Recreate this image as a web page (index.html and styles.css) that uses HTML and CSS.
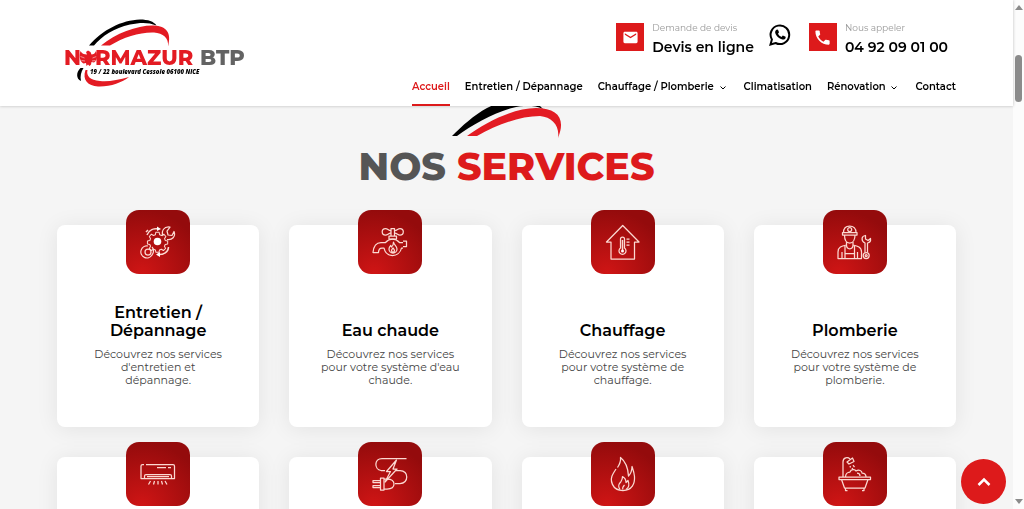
FILE: index.html
```
<!DOCTYPE html>
<html lang="fr">
<head>
    <meta charset="UTF-8">
    <meta name="viewport" content="width=device-width, initial-scale=1">
    <title>Normazur BTP</title>
    <link rel="stylesheet" href="styles.css">
</head>
<body>

    <header class="header">
        <div class="container header-inner">
            <a href="#" class="logo" aria-label="Normazur BTP">
                <svg viewBox="0 0 194 90" width="194" height="90">
                    <path fill="#000" d="M32 35.500C45 20 65 10 83 9.500c8 0 14 2 16.500 6C91 12 83 12.500 73 14.500 57 18 45 26 37 35.500z"/>
                    <path fill="#e31b23" d="M44 35.500C59 23 81 15 97 15.500c12 .5 18 7 14 21C112 28 106 23 97 22.500 83 22 67 27 53 35.500z"/>
                    <path fill="#000" d="M23.500 58C19 62 19 69 24 71 23 66 24 62 26.500 58z"/>
                    <path fill="#e31b23" d="M28.500 60C25 70 31 76 41 76.500c12 .5 24-4 31-9.500C61 70 51 72 43 71 33 70 29 66 30.500 60z"/>
                    <g transform="translate(-1.500 0)">
                        <path fill="#e31b23" d="M25 41c-2 6 0 11 3 12.500l2.500-.5.5 3 1.500-1.500 1.500 1.500 1.500-1.500.5-2.500 2.500.5c3-1.500 4-6 2-11.500-1 2.500-2.500 3.500-4.500 3.500l-1-2.500-2.500-1.500-2 1.500 1 2.500c-3 0-5.500-1-6.500-3.500z"/>
                        <path stroke="#fff" stroke-width=".5" fill="none" d="M25 46.500l4 1.500M26 50.500l3.500.5M41 46.500L37 48M40 50.500l-3.500.5"/>
                    </g>
                    <text class="logo-name" x="7" y="55">N</text>
                    <text class="logo-name" x="38" y="55">RMAZUR</text>
                    <text class="logo-name logo-grey" x="143" y="55">BTP</text>
                    <text class="logo-address" x="33" y="64">19 / 22 boulevard Cessole 06100 NICE</text>
                </svg>
            </a>

            <div class="header-right">
                <div class="contacts">
                    <a href="#" class="contact">
                        <span class="contact-icon">
                            <svg viewBox="0 0 24 24" width="17" height="17"><path fill="#fff" d="M20 4H4c-1.100 0-2 .9-2 2v12c0 1.100.9 2 2 2h16c1.100 0 2-.9 2-2V6c0-1.100-.9-2-2-2zm0 4l-8 5-8-5V6l8 5 8-5v2z"/></svg>
                        </span>
                        <span class="contact-text"><small>Demande de devis</small><strong>Devis en ligne</strong></span>
                    </a>
                    <a href="#" class="whatsapp" aria-label="WhatsApp">
                        <svg viewBox="0 0 22 22" width="22" height="22">
                            <path fill="none" stroke="#000" stroke-width="2" d="M1.500 20.500l1.400-5A9.300 9.300 0 1 1 6.600 19z"/>
                            <path d="M7.600 5.700c.5-.4 1.200-.3 1.500.3l.8 1.900c.1.400 0 .7-.3 1l-.6.800c.8 1.500 1.900 2.500 3.500 3.200l.9-1c.3-.3.600-.4.900-.2l1.900.9c.5.2.6.7.4 1.300-.5 1.300-1.900 1.900-3.200 1.600-3.500-.8-6.400-3.500-7.200-6.700-.3-1.200.4-2.500 1.400-3.100z"/>
                        </svg>
                    </a>
                    <a href="#" class="contact">
                        <span class="contact-icon">
                            <svg viewBox="0 0 24 24" width="19" height="19"><path fill="#fff" d="M6.620 10.790c1.440 2.830 3.760 5.140 6.590 6.590l2.200-2.200c.27-.27.67-.36 1.020-.24 1.120.37 2.330.57 3.570.57.55 0 1 .45 1 1V20c0 .55-.45 1-1 1-9.390 0-17-7.610-17-17 0-.55.45-1 1-1h3.500c.55 0 1 .45 1 1 0 1.250.2 2.450.57 3.570.11.35.03.74-.25 1.020l-2.200 2.200z"/></svg>
                        </span>
                        <span class="contact-text"><small>Nous appeler</small><strong>04 92 09 01 00</strong></span>
                    </a>
                </div>

                <nav class="nav">
                    <a href="#" class="active">Accueil</a>
                    <a href="#">Entretien / Dépannage</a>
                    <a href="#">Chauffage / Plomberie <svg class="caret" viewBox="0 0 6 4" width="6" height="4"><path d="M.5.5L3 3 5.500.5"/></svg></a>
                    <a href="#">Climatisation</a>
                    <a href="#">Rénovation <svg class="caret" viewBox="0 0 6 4" width="6" height="4"><path d="M.5.5L3 3 5.500.5"/></svg></a>
                    <a href="#">Contact</a>
                </nav>
            </div>
        </div>
    </header>

    <main class="services">
        <div class="container">
            <svg class="swoosh" viewBox="0 0 110 40" width="110" height="40">
                <path fill="#000" d="M0 36C10 26 22 15 35 8 50 0 72-4 86 4l5 5C82 5 72 5 60 8 40 14 20 25 5 36z"/>
                <path fill="#e31b23" d="M15 36C34 22 62 8 84 8c22 0 30 11 22 30C108 26 100 17 88 16 68 16 44 25 25 36z"/>
            </svg>
            <h1>NOS <span>SERVICES</span></h1>

            <div class="cards">
                <article class="card">
                    <div class="card-icon">
                        <svg viewBox="0 0 64 64">
                            <path d="M30 22h4l.7 3 2.300 1 2.700-1.600 2.600 2.800-1.600 2.600.8 2.200 3 .7v3.600l-3 .6-1 2.200 1.500 2.600-2.700 2.600-2.500-1.600-2.300 1-.7 2.800h-3.600l-.7-2.800-2.300-1-2.500 1.600-2.600-2.600 1.500-2.600-.9-2.200-2.900-.6v-3.600l2.900-.7.9-2.200-1.500-2.600 2.600-2.800 2.500 1.600 2.300-1z" transform="translate(5.200 4.200) scale(.82)"/>
                            <circle class="fill" cx="31.500" cy="31.500" r="3.800"/>
                            <path d="M37 26c-2-5 1-10 7-9l-3 4 1 4 4 .5 2-4c2 5-2 9-7 8M26 37c2 2 2 6 0 8a6 6 0 1 1-4-9"/>
                            <circle cx="22" cy="42" r="3"/>
                            <path d="M21 25c2-5 7-7 12-6M20 22l2-2M42.500 37c0 5-5 8-11 7.500" stroke-width="1.500"/>
                            <path class="fill" d="M31 16.500l4 2.500-4 2zM34 42l-4 2.500 4 2.500z"/>
                        </svg>
                    </div>
                    <h2>Entretien / Dépannage</h2>
                    <p>Découvrez nos services d'entretien et dépannage.</p>
                </article>

                <article class="card">
                    <div class="card-icon">
                        <svg viewBox="0 0 64 64">
                            <path d="M33 20.500c-3 0-3-2-5.500-2a3.300 3.300 0 0 0 0 6.600c2.500 0 2.500-2 5.500-2M36.500 20.500c3 0 3-2 5.500-2a3.300 3.300 0 0 1 0 6.600c-2.500 0-2.500-2-5.500-2"/>
                            <path d="M33 26v-7.500h3.500V26M31 26h7.500v3H31z"/>
                            <path d="M45 32.500h-3.500c-4-4.500-10-4.500-14 0H23c-5 0-7.500 4-8 10h5.500c0-3 1-4.500 3.500-4.500h2c1 5 4.500 7.500 8.500 7.500s8-2.500 9-7.500H45M45 31h3.500v5.500H45"/>
                            <path d="M35.500 32c.5 3 3.500 4 3.500 7a4 4 0 0 1-8 0c0-1.500.7-2.500 1.700-3.500l.8 1.500c1.500-1 2-3 2-5zM35 38c-2 2-2 4 0 4s2-2 0-4z"/>
                        </svg>
                    </div>
                    <h2>Eau chaude</h2>
                    <p>Découvrez nos services pour votre système d'eau chaude.</p>
                </article>

                <article class="card">
                    <div class="card-icon">
                        <svg viewBox="0 0 64 64">
                            <path d="M31.700 15.500L15.500 32H20v17h23.500V32H48z"/>
                            <path d="M29.500 38V29a2 2 0 0 1 4 0v9a3.500 3.500 0 1 1-4 0zM35.500 29h3M35.500 32h3M35.500 35h3"/>
                            <path d="M31.500 30v10" stroke-width="1.500"/>
                            <circle class="fill" cx="31.500" cy="41" r="1.500"/>
                        </svg>
                    </div>
                    <h2>Chauffage</h2>
                    <p>Découvrez nos services pour votre système de chauffage.</p>
                </article>

                <article class="card">
                    <div class="card-icon">
                        <svg viewBox="0 0 64 64">
                            <path d="M20.500 22.500c0-4 2.500-6.500 6.200-6.500s6.300 2.500 6.300 6.500M19.500 22.500H34V25H19.500zM21.500 25c0 4 1.500 8 5.200 8s5.300-4 5.300-8"/>
                            <circle cx="26.700" cy="19.500" r="2"/>
                            <path d="M23.500 32v3c-5 1-8.500 2-8.500 7v6.500h23.500V42c0-5-4-6-8.500-7v-3M19 48.500V42M34.500 48.500V42M22 35.500V48M31.500 35.500V48M22 43.500h9.500M23.500 35c0 5 6.500 5 6.500 0"/>
                            <path d="M42 42.500V33c-4-2-4-7 .5-7.500v3.500l2.500 1.500 2.500-2c.5 2.500-1 4-3 4.500v9.500"/>
                            <circle cx="43.200" cy="45.500" r="3"/>
                            <circle cx="43.200" cy="45.500" r="1"/>
                        </svg>
                    </div>
                    <h2>Plomberie</h2>
                    <p>Découvrez nos services pour votre système de plomberie.</p>
                </article>

                <article class="card">
                    <div class="card-icon">
                        <svg viewBox="0 0 64 64">
                            <path d="M20 22.500h27c1 0 1.500.5 1.500 1.500v12.500H15V24c0-1 .5-1.500 1.500-1.500H18M31 25.500h9M42 25.500h3"/>
                            <path d="M18.500 36.500V34c0-1 .5-1.500 1.500-1.500h24c1 0 1.500.5 1.500 1.500v2.500M21 34.500h22"/>
                            <path d="M24.500 39l-2 3.500M28.500 39l-1 3.500M32 39v3.500M35.500 39l1 3.500M39 39l2 3.500"/>
                        </svg>
                    </div>
                    <h2>Climatisation</h2>
                    <p>Découvrez nos services de climatisation.</p>
                </article>

                <article class="card">
                    <div class="card-icon">
                        <svg viewBox="0 0 64 64">
                            <path d="M48.500 16.500H24c-8 0-8 11-1 12h4M38 28.500h4c9 0 9 13 0 13h-5"/>
                            <path d="M38.500 18l-10 11.500h4L27 40l12-13h-4z"/>
                            <path d="M26 36h-3.500v12H26zM26 37h3c5 0 7 2 7 5s-2 5-7 5h-3M22.500 38.500H15v2h7.500M22.500 43.500H15v2h7.500"/>
                        </svg>
                    </div>
                    <h2>Électricité</h2>
                    <p>Découvrez nos services d'électricité.</p>
                </article>

                <article class="card">
                    <div class="card-icon">
                        <svg viewBox="0 0 64 64">
                            <path d="M25 27l-2.500 4C18 38 21 48.500 32 48.500c9 0 12-7 11.500-14-.3-4-1.500-7-2.500-10 0 4-1 7-3.500 9.500C37 26 34 19 29.500 15.500c.5 4-1 7-3 10"/>
                            <path d="M29 47.500c-3-4-.5-6 1-8 1-1.500 1.500-3 1.500-5 2 1 3.500 3 3.500 6l2-2c1.500 4 1.500 7-2 9M32 47.500c-1-2 0-3 1.500-4.500"/>
                        </svg>
                    </div>
                    <h2>Gaz</h2>
                    <p>Découvrez nos services de gaz.</p>
                </article>

                <article class="card">
                    <div class="card-icon">
                        <svg viewBox="0 0 64 64">
                            <path d="M16 35h31.500v2.500H16zM18.500 37.500l3 8.500h20.500l3-8.500M22.500 46v2.500h2M41 46v2.500h-2M20 35V20c0-5 5-5 7-3"/>
                            <path d="M24 20l5.500-4 1.500 3.500-5 2.500zM27 24l.5 1.500M30 23l1.500 2M29 26l1 1.500"/>
                            <path d="M22.500 35c0-3 2-5 4.500-5 1-3 5-3 6-1 3-2 6 0 6 2 3 0 4 2 4 4M34 31c2 0 3 1 3 3"/>
                        </svg>
                    </div>
                    <h2>Rénovation</h2>
                    <p>Découvrez nos services de rénovation.</p>
                </article>
            </div>
        </div>
    </main>

    <button type="button" class="to-top" aria-label="Haut de page">
        <svg viewBox="0 0 14 10" width="14" height="10"><path fill="none" stroke="#fff" stroke-width="2.500" d="M1.500 8L7 2.500 12.500 8"/></svg>
    </button>

    <div class="scrollbar" aria-hidden="true">
        <svg viewBox="0 0 8 5" width="8" height="5"><path fill="#8b8b8b" d="M4 0l4 5H0z"/></svg>
        <div class="thumb"></div>
        <svg viewBox="0 0 8 5" width="8" height="5"><path fill="#8b8b8b" d="M4 5l4-5H0z"/></svg>
    </div>

</body>
</html>
```
FILE: styles.css
```
* {
    box-sizing: border-box;
}
body {
    margin: 0;
    height: 100vh;
    overflow: hidden;
    padding-right: 11px;
    background-color: #f5f5f5;
    font-family: 'Montserrat', 'Inter', sans-serif;
    color: #000;
}
a {
    color: inherit;
    text-decoration: none;
}
.container {
    max-width: 1140px;
    margin: 0 auto;
    padding: 0 57px;
}

/* header */
.header {
    position: fixed;
    top: 0;
    left: 0;
    right: 11px;
    z-index: 10;
    background-color: #fff;
    box-shadow: 0 0 3px rgba(0, 0, 0, 0.25);
}
.header-inner {
    display: flex;
    justify-content: space-between;
    align-items: flex-start;
}
.logo {
    padding-top: 10px;
}
.logo svg {
    display: block;
}
.logo-name {
    font-size: 21px;
    font-weight: 800;
    fill: #e31b23;
}
.logo-grey {
    fill: #636363;
}
.logo-address {
    font-family: 'Open Sans', sans-serif;
    font-size: 6px;
    font-weight: 800;
    font-style: italic;
}
.header-right {
    display: flex;
    flex-direction: column;
    align-items: flex-end;
    padding-top: 22px;
}
.contacts {
    display: flex;
    align-items: flex-start;
    padding-right: 8px;
}
.contact {
    display: flex;
    gap: 8px;
}
.contact-icon {
    display: flex;
    align-items: center;
    justify-content: center;
    width: 28px;
    height: 28px;
    margin-top: 1px;
    background-color: #dd1a1b;
}
.contact-text small {
    display: block;
    font-size: 9px;
    line-height: 12px;
    color: #999;
}
.contact-text strong {
    display: block;
    margin-top: 4px;
    font-size: 14px;
    line-height: 18px;
    font-weight: 600;
}
.whatsapp {
    margin: 2px 18px 0 15px;
}
.nav {
    display: flex;
    gap: 15px;
    margin-top: 21px;
    font-size: 10px;
    font-weight: 600;
}
.nav a {
    padding: 2px 0 9px;
    line-height: 16px;
    border-bottom: 2px solid transparent;
    white-space: nowrap;
}
.nav a.active {
    color: #dd1a1b;
    border-color: #dd1a1b;
}
.caret {
    margin: 0 3px 0 3px;
    fill: none;
    stroke: #000;
}

/* services */
.services {
    padding-top: 100px;
}
.swoosh {
    display: block;
    margin: 0 auto;
}
h1 {
    margin: 2px 0 33px;
    text-align: center;
    font-size: 38px;
    line-height: 50px;
    font-weight: 800;
    color: #555;
}
h1 span {
    color: #dd1a1b;
}
.cards {
    display: grid;
    grid-template-columns: repeat(4, 1fr);
    gap: 30px;
}
.card {
    position: relative;
    aspect-ratio: 1;
    padding: 79px 30px 0;
    text-align: center;
    background-color: #fff;
    border-radius: 8px;
    box-shadow: 0 2px 22px rgba(0, 0, 0, 0.08);
}
.card-icon {
    position: absolute;
    top: -15px;
    left: 50%;
    width: 64px;
    height: 64px;
    margin-left: -32px;
    border-radius: 13px;
    background: radial-gradient(circle at 25% 100%, #d01515, #940b0c 80%);
}
.card-icon svg {
    display: block;
    fill: none;
    stroke: #fcd9d2;
    stroke-width: 1.25;
    stroke-linejoin: round;
}
.card-icon .fill {
    fill: #fff;
    stroke: none;
}
.card h2 {
    display: flex;
    align-items: flex-end;
    justify-content: center;
    min-height: 36px;
    margin: 0 0 8px;
    font-size: 16px;
    line-height: 18px;
    font-weight: 600;
}
.card p {
    margin: 0;
    font-size: 11px;
    line-height: 13px;
    color: #444;
}

.to-top {
    position: fixed;
    right: 18px;
    bottom: 5px;
    display: flex;
    align-items: center;
    justify-content: center;
    width: 45px;
    height: 45px;
    padding: 0;
    border: none;
    border-radius: 50%;
    background-color: #dd1a1b;
    cursor: pointer;
}

.scrollbar {
    position: fixed;
    top: 0;
    right: 0;
    bottom: 0;
    display: flex;
    flex-direction: column;
    align-items: center;
    width: 11px;
    padding: 5px 0;
    background-color: #fcfcfc;
}
.thumb {
    width: 7px;
    height: 47px;
    margin: 45px 0 auto;
    border-radius: 4px;
    background-color: #8b8b8b;
}
```
